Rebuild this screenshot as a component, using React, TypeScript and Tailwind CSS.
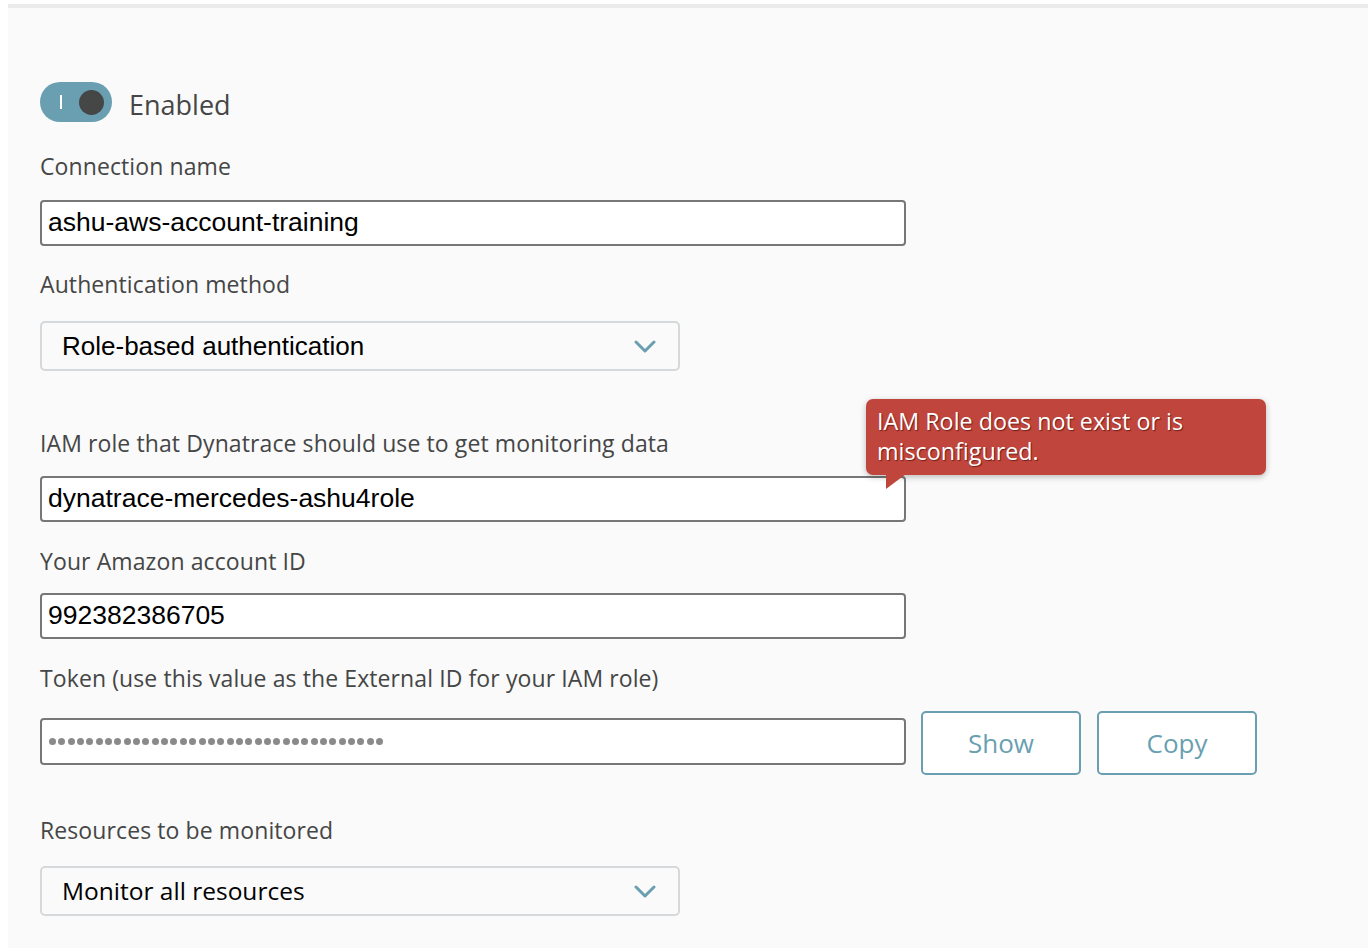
import React from 'react';

const label = "h-[30px] flex items-center text-[23px] tracking-[0.1px] text-[#454646] font-['Open_Sans',sans-serif]";
const input =
  "w-[866px] bg-white border-2 border-[#777] rounded-[4px] flex items-center px-[6px] text-[26.5px] text-black font-['Liberation_Sans',Arial,sans-serif]";

const Chevron = () => (
  <svg width="22" height="14" viewBox="0 0 22 14" className="shrink-0 mt-[2px]">
    <path d="M2 2 L11 11 L20 2" fill="none" stroke="#6a9fb1" strokeWidth="3" strokeLinecap="round" strokeLinejoin="round" />
  </svg>
);

const Select = ({ value, sans }: { value: string; sans?: boolean }) => (
  <div className="w-[640px] h-[50px] border-2 border-[#d5d9dc] rounded-[5px] bg-[#fafafa] flex items-center justify-between pl-[20px] pr-[22px]">
    <span
      className={
        sans
          ? "text-[24.5px] text-black font-['Open_Sans',sans-serif]"
          : "text-[26px] text-black font-['Liberation_Sans',Arial,sans-serif]"
      }
    >
      {value}
    </span>
    <Chevron />
  </div>
);

export default function App() {
  return (
    <div className="min-h-screen bg-white">
      <div className="ml-[8px] mt-[4px] border-t-4 border-[#ebebeb] bg-[#fafafa] h-[944px] pl-[32px] pt-[74px]">
        <div className="flex items-start h-[40px] gap-[17px]">
          <div className="w-[72px] h-[40px] rounded-full bg-[#6a9fb1] flex items-center justify-between pl-[20px] pr-[8px]">
            <div className="w-[2px] h-[14px] bg-white" />
            <div className="w-[25px] h-[25px] rounded-full bg-[#454646]" />
          </div>
          <span className="h-[40px] text-[27px] leading-[45px] text-[#454646] font-['Open_Sans',sans-serif]">Enabled</span>
        </div>

        <div className={label + ' mt-[29px]'}>Connection name</div>
        <div className={input + ' h-[46px] mt-[19px]'}>ashu-aws-account-training</div>

        <div className={label + ' mt-[23px]'}>Authentication method</div>
        <div className="mt-[22px]">
          <Select value="Role-based authentication" />
        </div>

        <div className={label + ' mt-[57px]'}>IAM role that Dynatrace should use to get monitoring data</div>
        <div className="relative mt-[18px] w-[866px]">
          <div className={input + ' h-[46px]'}>dynatrace-mercedes-ashu4role</div>
          <div className="absolute left-[826px] top-[-77px] w-[400px] h-[76px] rounded-[7px] bg-[#c0453c] shadow-[0_2px_6px_rgba(0,0,0,0.25)] px-[11px] pt-[7px] text-[23.3px] leading-[30px] text-white font-['Open_Sans',sans-serif] [text-shadow:1px_1px_1px_rgba(90,20,15,0.8)]">
            IAM Role does not exist or is misconfigured.
            <svg width="20" height="16" viewBox="0 0 20 16" className="absolute left-[20px] top-[75px]">
              <path d="M0 0 L20 0 L0 15 Z" fill="#c0453c" />
            </svg>
          </div>
        </div>

        <div className={label + ' mt-[24px]'}>Your Amazon account ID</div>
        <div className={input + ' h-[46px] mt-[17px]'}>992382386705</div>

        <div className={label + ' mt-[24px]'}>Token (use this value as the External ID for your IAM role)</div>
        <div className="flex items-start mt-[18px] h-[64px]">
          <div className={input + ' h-[47px] mt-[7px] gap-[2.35px] pl-[7px]'}>
            {Array.from({ length: 36 }).map((_, i) => (
              <span key={i} className="w-[7px] h-[7px] rounded-full bg-[#8a8a8a]" />
            ))}
          </div>
          <button className="ml-[15px] w-[160px] h-[64px] border-2 border-[#6a9fb1] rounded-[5px] bg-white text-[26px] text-[#6a9fb1] font-['Open_Sans',sans-serif]">
            Show
          </button>
          <button className="ml-[16px] w-[160px] h-[64px] border-2 border-[#6a9fb1] rounded-[5px] bg-white text-[26px] text-[#6a9fb1] font-['Open_Sans',sans-serif]">
            Copy
          </button>
        </div>

        <div className={label + ' mt-[40px]'}>Resources to be monitored</div>
        <div className="mt-[21px]">
          <Select value="Monitor all resources" sans />
        </div>
      </div>
    </div>
  );
}
